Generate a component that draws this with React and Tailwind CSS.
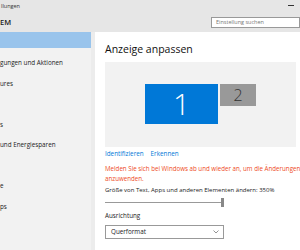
export default function App() {
  const side = [
    { t: "gungen und Aktionen" },
    { t: "ures" },
    { t: "" },
    { t: "s" },
    { t: "und Energiesparen" },
    { t: "" },
    { t: "e" },
    { t: "ps" },
  ];
  return (
    <div
      className="relative flex h-[250px] w-[300px] flex-col overflow-hidden bg-[#e6e6e6] text-[#1a1a1a]"
      style={{ fontFamily: '"Open Sans", "Noto Sans", sans-serif' }}
    >
      <div className="flex h-[13px] items-center justify-between pl-[1px] pr-[6px]">
        <span className="text-[5.5px] leading-none text-[#333]">llungen</span>
        <span className="mb-[2px] h-px w-[6px] bg-[#333]" />
      </div>
      <div className="flex h-[19px] items-center justify-between">
        <span className="text-[7.5px] font-semibold leading-none">EM</span>
        <div className="flex h-[11px] w-[89px] items-center border border-[#999] bg-white pl-[4px] text-[5.5px] leading-none text-[#777]">
          Einstellung suchen
        </div>
      </div>
      <div className="flex min-h-0 flex-1">
        <div className="flex w-[91px] shrink-0 flex-col bg-[#f2f2f2]">
          <div className="h-[16px] bg-[#99c4ec]" />
          <div className="flex flex-col pt-[5px]">
            {side.map((s, i) => (
              <div key={i} className="flex h-[20.5px] items-center whitespace-nowrap text-[6.3px] leading-none text-[#222]">
                {s.t}
              </div>
            ))}
          </div>
        </div>
        <div className="w-[4px] shrink-0 bg-[#ececec]" />
        <div className="flex min-w-0 flex-1 flex-col overflow-hidden bg-white pl-[10px] pr-[4px]">
          <div className="pt-[9px] text-[10.5px] leading-[16px] text-[#111]">Anzeige anpassen</div>
          <div className="mt-[5px] flex h-[85px] shrink-0 items-start bg-[#f2f2f2] pl-[40px] pt-[22px]">
            <div className="flex h-[40px] w-[73px] items-center justify-center bg-[#0078d7] text-[30px] font-light leading-none text-white">
              1
            </div>
            <div className="ml-[2px] flex h-[22px] w-[36px] items-center justify-center bg-[#999999] text-[16px] font-light leading-none text-[#333]">
              2
            </div>
          </div>
          <div className="mt-[2px] flex gap-[7px] text-[6.3px] leading-[10px] text-[#0078d7]">
            <span>Identifizieren</span>
            <span>Erkennen</span>
          </div>
          <div className="mt-[5px] whitespace-nowrap text-[6.2px] leading-[10px] text-[#ee4a1c]">
            Melden Sie sich bei Windows ab und wieder an, um die Änderungen
            <br />
            anzuwenden.
          </div>
          <div className="mt-[1px] whitespace-nowrap text-[6px] leading-[10px] text-[#222]">
            Größe von Text, Apps und anderen Elementen ändern: 350%
          </div>
          <div className="mt-[2px] flex h-[10px] w-[119px] shrink-0 items-center">
            <div className="h-px flex-1 bg-[#999]" />
            <div className="h-[9px] w-[3px] bg-[#888]" />
          </div>
          <div className="mt-[4px] text-[6.3px] leading-[10px] text-[#222]">Ausrichtung</div>
          <div className="mt-[4px] flex h-[14px] w-[119px] shrink-0 items-center justify-between border border-[#999] bg-white pl-[5px] pr-[4px] text-[6.3px] leading-none text-[#222]">
            <span>Querformat</span>
            <svg width="6" height="4" viewBox="0 0 6 4">
              <path d="M0.5 0.5 L3 3 L5.5 0.5" fill="none" stroke="#777" strokeWidth="0.8" />
            </svg>
          </div>
        </div>
      </div>
    </div>
  );
}
